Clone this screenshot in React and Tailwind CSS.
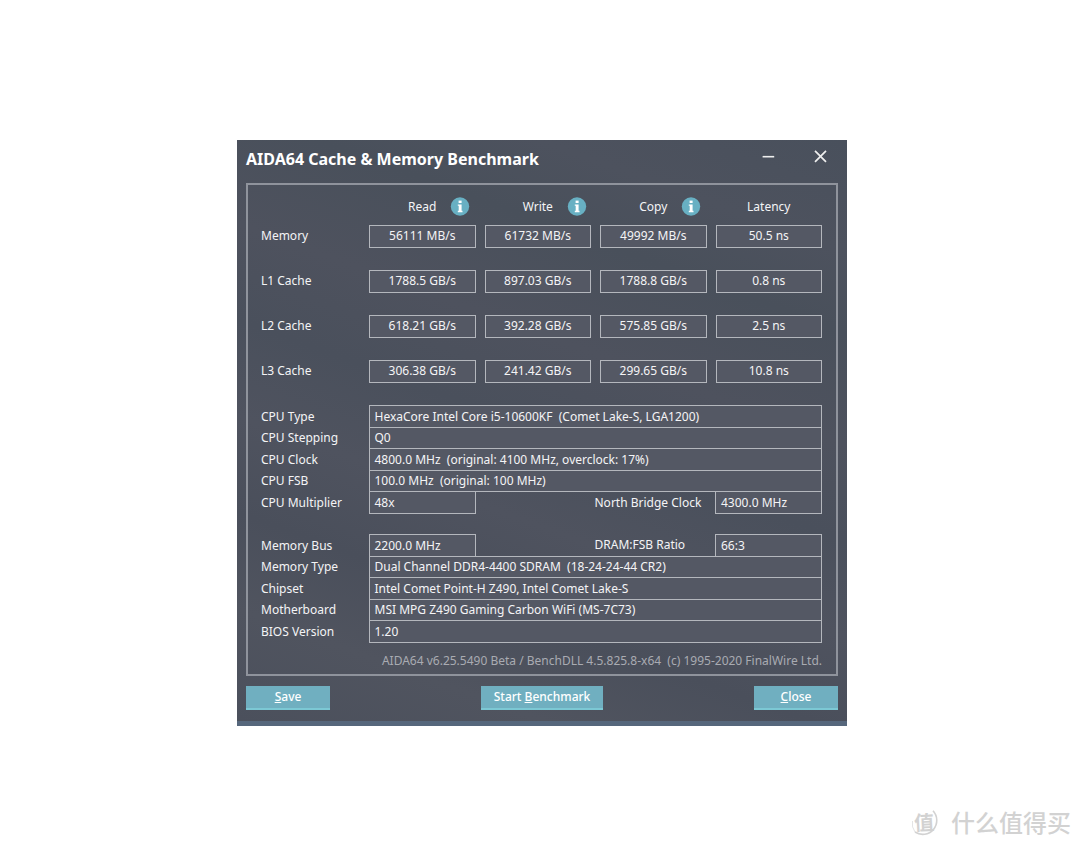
/**
 * App.jsx — AIDA64 Cache & Memory Benchmark window
 */
import { Fragment } from 'react'

const COLUMNS = [
  { name: 'Read', info: true },
  { name: 'Write', info: true },
  { name: 'Copy', info: true },
  { name: 'Latency', info: false },
]

const RESULTS = [
  { label: 'Memory',   values: ['56111 MB/s', '61732 MB/s', '49992 MB/s', '50.5 ns'] },
  { label: 'L1 Cache', values: ['1788.5 GB/s', '897.03 GB/s', '1788.8 GB/s', '0.8 ns'] },
  { label: 'L2 Cache', values: ['618.21 GB/s', '392.28 GB/s', '575.85 GB/s', '2.5 ns'] },
  { label: 'L3 Cache', values: ['306.38 GB/s', '241.42 GB/s', '299.65 GB/s', '10.8 ns'] },
]

// null = empty spacer row
const DETAILS = [
  { label: 'CPU Type', value: 'HexaCore Intel Core i5-10600KF  (Comet Lake-S, LGA1200)' },
  { label: 'CPU Stepping', value: 'Q0' },
  { label: 'CPU Clock', value: '4800.0 MHz  (original: 4100 MHz, overclock: 17%)' },
  { label: 'CPU FSB', value: '100.0 MHz  (original: 100 MHz)' },
  { label: 'CPU Multiplier', value: '48x', side: { label: 'North Bridge Clock', value: '4300.0 MHz' } },
  null,
  { label: 'Memory Bus', value: '2200.0 MHz', side: { label: 'DRAM:FSB Ratio', value: '66:3' } },
  { label: 'Memory Type', value: 'Dual Channel DDR4-4400 SDRAM  (18-24-24-44 CR2)' },
  { label: 'Chipset', value: 'Intel Comet Point-H Z490, Intel Comet Lake-S' },
  { label: 'Motherboard', value: 'MSI MPG Z490 Gaming Carbon WiFi (MS-7C73)' },
  { label: 'BIOS Version', value: '1.20' },
]

const BOX = 'border border-[#b4b7bd] bg-[#545864]'

function InfoIcon() {
  return (
    <svg viewBox="0 0 20 20" className="block size-5" aria-hidden="true">
      <circle cx="10" cy="9.5" r="9.2" fill="#68b0c3" />
      <rect x="8.6" y="3.6" width="3" height="2.4" fill="#fff" />
      <path d="M7.8 7.4h3.8v6.4h.9v1.4H7.8v-1.4h.9V8.8h-.9z" fill="#fff" />
    </svg>
  )
}

function TitleBar() {
  return (
    <header className="flex h-[43px] items-start justify-between pl-[9px] pr-[18px] pt-2">
      <h1 className="text-[16px] font-bold leading-[22px] text-white">
        AIDA64 Cache &amp; Memory Benchmark
      </h1>
      <div className="flex gap-9">
        <button type="button" aria-label="Minimize" className="flex size-4 items-center justify-center">
          <svg viewBox="0 0 16 16" className="size-4" stroke="#eee" strokeWidth="1.6">
            <path d="M1.6 8.7h11.6" />
          </svg>
        </button>
        <button type="button" aria-label="Close window" className="flex size-4 items-center justify-center">
          <svg viewBox="0 0 16 16" className="size-4" stroke="#eee" strokeWidth="1.7">
            <path d="M2 2.8l11 11M13 2.8l-11 11" />
          </svg>
        </button>
      </div>
    </header>
  )
}

function ResultsTable() {
  return (
    <table className="w-full table-fixed">
      <thead>
        <tr className="h-10">
          <td className="w-[99px]" />
          {COLUMNS.map(({ name, info }) => (
            <th key={name} scope="col" className="pl-[9px] pt-3 align-top font-normal">
              <span className="grid h-5 grid-cols-[1fr_auto_1fr] items-center gap-x-[14px]">
                <span />
                <span>{name}</span>
                {info ? <InfoIcon /> : <span />}
              </span>
            </th>
          ))}
        </tr>
      </thead>
      <tbody>
        {RESULTS.map(({ label, values }) => (
          <tr key={label} className="h-[45px]">
            <th scope="row" className="text-left align-top font-normal leading-[22px]">{label}</th>
            {values.map((value, i) => (
              <td key={COLUMNS[i].name} className="pl-[9px] text-center align-top">
                <div className={`h-[23px] leading-5 ${BOX}`}>{value}</div>
              </td>
            ))}
          </tr>
        ))}
      </tbody>
    </table>
  )
}

function DetailsTable() {
  return (
    <table className="w-full table-fixed border-collapse leading-5">
      <colgroup>
        <col className="w-[108px]" />
        <col className="w-[106px]" />
        <col />
        <col className="w-[121px]" />
        <col className="w-[106px]" />
      </colgroup>
      <tbody>
        {DETAILS.map((row, i) => (
          <tr key={row ? row.label : `gap-${i}`} className="odd:h-[22px] even:h-[21px]">
            {row ? (
              <Fragment>
                <th scope="row" className="p-0 text-left font-normal">{row.label}</th>
                <td colSpan={row.side ? 1 : 4} className={`whitespace-pre py-0 pl-[5px] ${BOX}`}>
                  {row.value}
                </td>
                {row.side && (
                  <Fragment>
                    <td className="p-0" />
                    <th scope="row" className="p-0 text-left font-normal">{row.side.label}</th>
                    <td className={`py-0 pl-[5px] ${BOX}`}>{row.side.value}</td>
                  </Fragment>
                )}
              </Fragment>
            ) : (
              <td colSpan={5} className="p-0" />
            )}
          </tr>
        ))}
      </tbody>
    </table>
  )
}

function ActionButton({ className, children }) {
  return (
    <button
      type="button"
      className={`h-6 border-b-2 border-[#7cc8d4] bg-[#70afc0] font-medium leading-[22px] text-white ${className}`}
    >
      {children}
    </button>
  )
}

function Watermark() {
  return (
    <div className="absolute bottom-[11px] right-[9px] flex items-center gap-[10px] font-medium text-[#d2d2d2]">
      <span className="relative flex size-[30px] items-center justify-center">
        <svg viewBox="0 0 30 30" className="absolute inset-0 size-[30px]" fill="none" stroke="#d2d2d2">
          <path d="M22 2.8A14 14 0 0 1 4 24" strokeWidth="1.6" />
          <path d="M4 24A14 14 0 0 1 1.5 13" strokeWidth=".6" />
        </svg>
        <span className="-rotate-3 pr-1 text-[20px] font-bold leading-none">值</span>
      </span>
      <span className="text-[24px] leading-[30px]">什么值得买</span>
    </div>
  )
}

export default function App() {
  return (
    <div className="relative min-h-screen bg-white pl-1 pt-[140px] font-['Noto_Sans','Noto_Sans_CJK_SC',sans-serif] text-[12px]">
      <main className="mx-auto w-full max-w-[610px] border-b-[5px] border-[#56677c] bg-[#4b505c] bg-[linear-gradient(200deg,#49505c_0%,#4d525e_14%,#49505b_24%,#4e525e_38%,#4a505c_50%,#4f535f_62%,#4a4f5b_74%,#50545f_86%,#4b505c_100%)] text-[#f4f4f6]">
        <TitleBar />
        <div className="px-[9px]">
          <section className="border-2 border-[#8f939c] pb-[3px] pl-[13px] pr-[14px]">
            <ResultsTable />
            <DetailsTable />
            <p className="mt-2 whitespace-pre text-right leading-5 text-[#a9abb2]">
              {'AIDA64 v6.25.5490 Beta / BenchDLL 4.5.825.8-x64  (c) 1995-2020 FinalWire Ltd.'}
            </p>
          </section>
          <footer className="grid grid-cols-[1fr_auto_1fr] pb-[11px] pt-[10px]">
            <ActionButton className="w-[84px]"><u>S</u>ave</ActionButton>
            <ActionButton className="w-[122px]">Start <u>B</u>enchmark</ActionButton>
            <ActionButton className="w-[84px] justify-self-end"><u>C</u>lose</ActionButton>
          </footer>
        </div>
      </main>
      <Watermark />
    </div>
  )
}
